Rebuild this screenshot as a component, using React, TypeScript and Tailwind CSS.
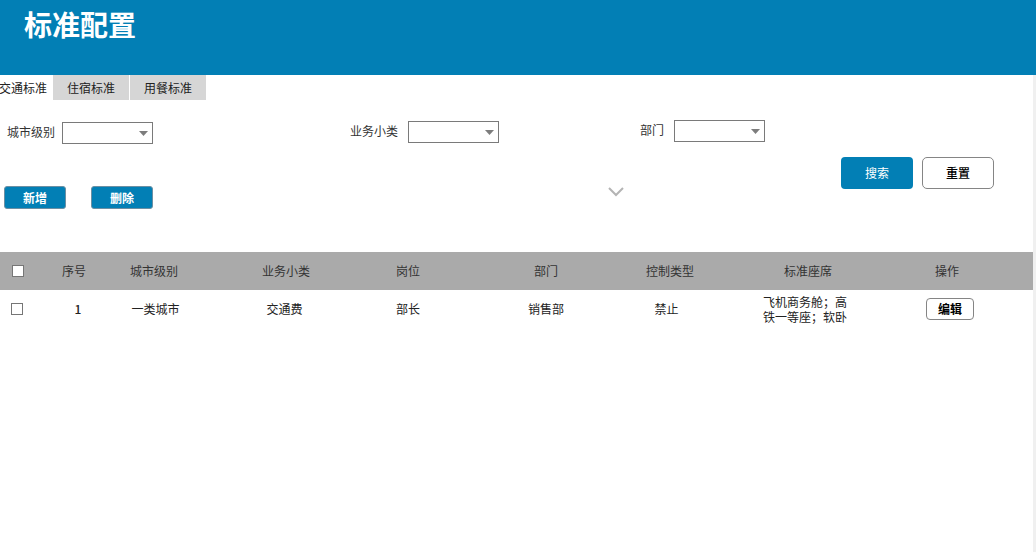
import React from "react";

const font = { fontFamily: '"Noto Sans CJK SC", "Noto Sans", sans-serif' };

function Select({ className = "" }: { className?: string }) {
  return (
    <div className={`relative w-[91px] h-[22px] border border-[#7a7a7a] bg-white ${className}`}>
      <svg className="absolute right-[4px] top-[8px]" width="9" height="5" viewBox="0 0 9 5">
        <path d="M0 0 L9 0 L4.5 5 Z" fill="#7d7d7d" />
      </svg>
    </div>
  );
}

function Checkbox() {
  return <div className="w-[12px] h-[12px] border border-[#767676] bg-white" />;
}

const cols = "grid grid-cols-[35px_78px_82px_182px_62px_214px_34px_242px_36px_1fr]";

const Cell = ({ children, className = "" }: { children?: React.ReactNode; className?: string }) => (
  <div className={`flex justify-center items-center whitespace-nowrap ${className}`}>{children}</div>
);

export default function App() {
  return (
    <div className="w-[1036px] h-[552px] bg-white text-[12px] text-[#333] overflow-hidden flex flex-col" style={font}>
      <div className="h-[75px] bg-[#027fb5] shrink-0 pl-[24px] pt-[4px]">
        <h1 className="text-[28px] font-bold text-white leading-[40px]">标准配置</h1>
      </div>
      <div className="flex flex-1">
        <div className="flex-1 flex flex-col">
          {/* tabs */}
          <div className="flex h-[25px] text-[#222]">
            <div className="w-[54px] flex items-center bg-white -ml-[1px]">交通标准</div>
            <div className="w-[76px] flex items-center justify-center bg-[#d6d6d6]">住宿标准</div>
            <div className="w-[76px] flex items-center justify-center bg-[#d6d6d6] ml-[1px]">用餐标准</div>
          </div>
          {/* filters */}
          <div className="flex mt-[20px] h-[23px]">
            <div className="w-[350px] pl-[7px] flex items-start gap-[7px]">
              <span className="mt-[3px]">城市级别</span>
              <Select className="mt-[2px]" />
            </div>
            <div className="w-[290px] flex items-start gap-[10px]">
              <span className="mt-[2px]">业务小类</span>
              <Select className="mt-[1px]" />
            </div>
            <div className="flex items-start gap-[10px]">
              <span className="mt-[1px]">部门</span>
              <Select />
            </div>
          </div>
          {/* actions */}
          <div className="flex mt-[14px] h-[52px]">
            <div className="flex self-end gap-[25px] pl-[4px]">
              <button className="w-[62px] h-[23px] rounded-[3px] bg-[#027fb5] border border-[#6c8fa3] text-white font-bold">新增</button>
              <button className="w-[62px] h-[23px] rounded-[3px] bg-[#027fb5] border border-[#6c8fa3] text-white font-bold">删除</button>
            </div>
            <div className="self-end mb-[12px] ml-[455px]">
              <svg width="16" height="10" viewBox="0 0 16 10">
                <path d="M1 1 L8 8 L15 1" fill="none" stroke="#b4b4b4" strokeWidth="2" />
              </svg>
            </div>
            <div className="flex self-start gap-[9px] ml-[217px]">
              <button className="w-[72px] h-[32px] rounded-[4px] bg-[#027fb5] text-white">搜索</button>
              <button className="w-[72px] h-[32px] rounded-[5px] border border-[#858585] bg-white text-black font-medium">重置</button>
            </div>
          </div>
          {/* table */}
          <div className="mt-[43px]">
            <div className={`${cols} h-[38px] bg-[#aaaaaa] text-[#333]`}>
              <Cell><Checkbox /></Cell>
              <Cell>序号</Cell>
              <Cell>城市级别</Cell>
              <Cell>业务小类</Cell>
              <Cell>岗位</Cell>
              <Cell>部门</Cell>
              <Cell>控制类型</Cell>
              <Cell>标准座席</Cell>
              <Cell>操作</Cell>
              <div />
            </div>
            <div className={`${cols} h-[38px] text-[#222]`}>
              <Cell className="-ml-[1px]"><Checkbox /></Cell>
              <Cell className="pl-[8px] font-medium">1</Cell>
              <Cell className="pl-[3px]">一类城市</Cell>
              <Cell className="pr-[3px]">交通费</Cell>
              <Cell>部长</Cell>
              <Cell>销售部</Cell>
              <Cell className="pr-[7px]">禁止</Cell>
              <Cell className="pr-[2px]">
                <div className="w-[88px] leading-[15px] whitespace-normal text-left">飞机商务舱；高铁一等座；软卧</div>
              </Cell>
              <Cell className="pl-[6px]">
                <button className="w-[48px] h-[22px] shrink-0 rounded-[4px] border border-[#858585] bg-white text-black font-bold">编辑</button>
              </Cell>
              <div />
            </div>
          </div>
        </div>
        <div className="w-[3px] bg-[#f0f0f0]" />
      </div>
    </div>
  );
}
